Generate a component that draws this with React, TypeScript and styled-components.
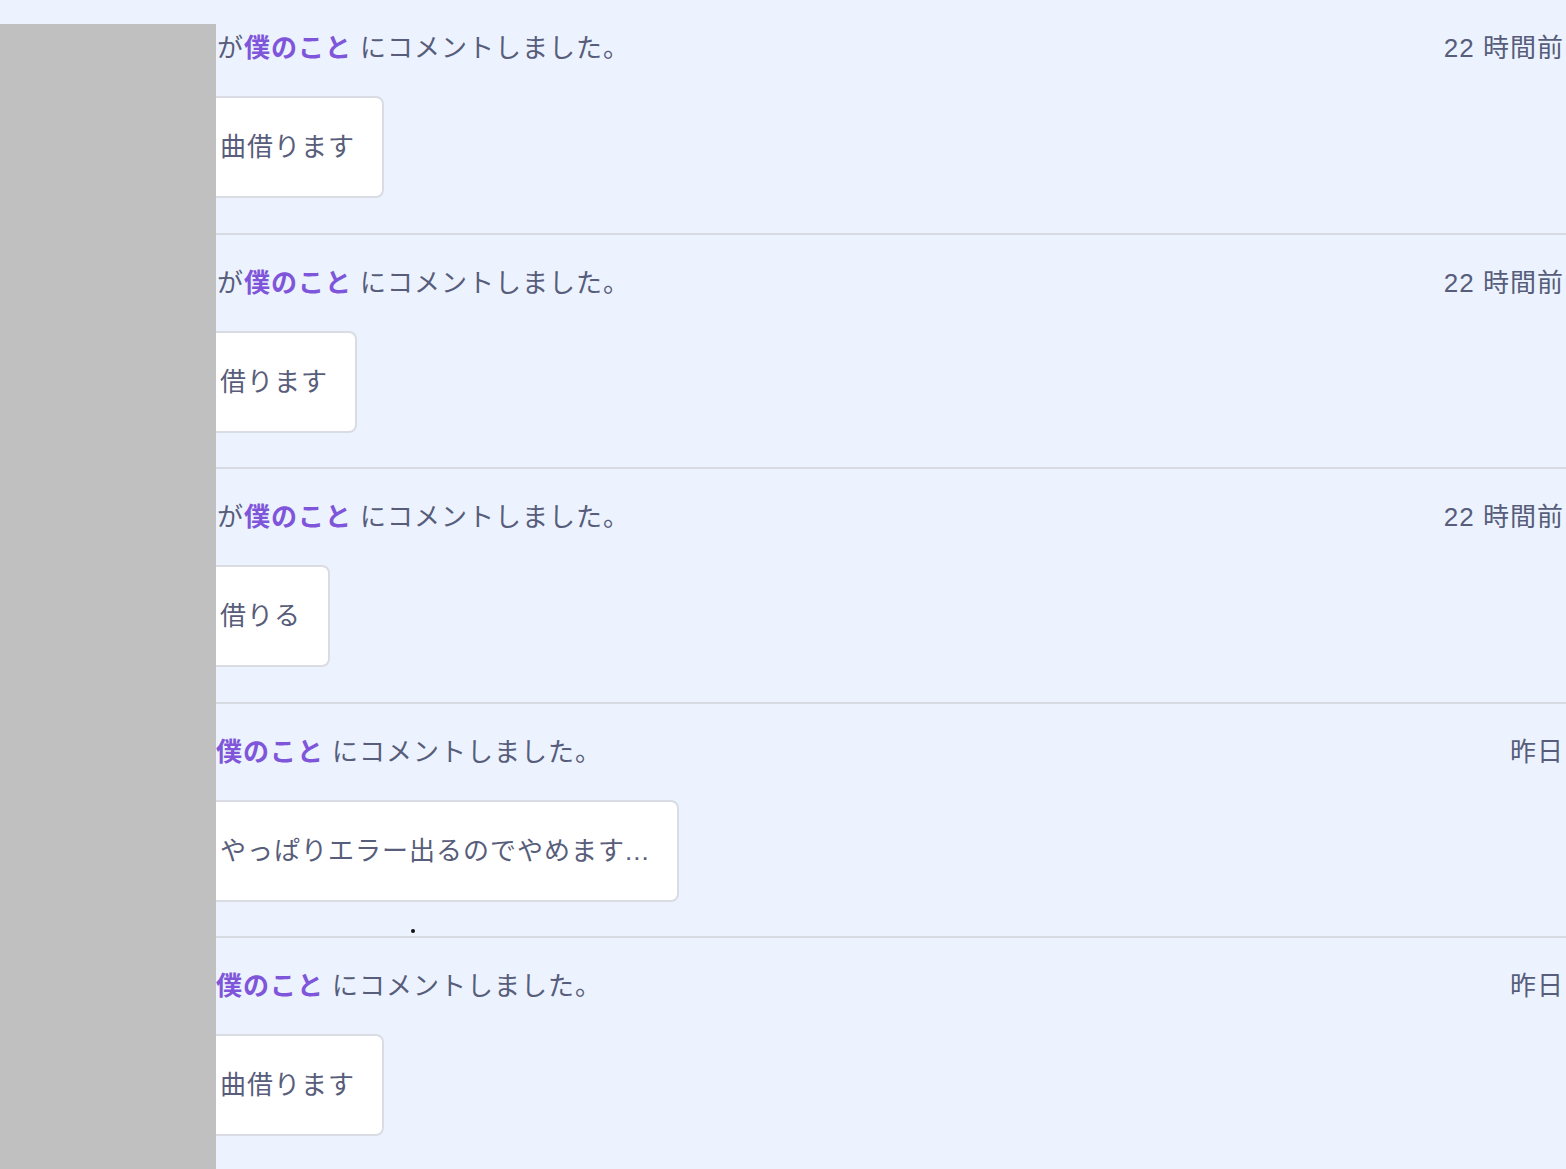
import React from "react";
import styled, { createGlobalStyle } from "styled-components";

const Global = createGlobalStyle`
  html, body {
    margin: 0;
    padding: 0;
    background: #ecf3ff;
  }
  body {
    font-family: "Liberation Sans", "Noto Sans CJK JP", sans-serif;
    color: #575d7a;
  }
`;

const Page = styled.div`
  position: relative;
  min-height: 1169px;
  overflow: hidden;
  background: #ecf3ff;
`;

const List = styled.ul`
  list-style: none;
  margin: 0;
  padding: 0;
`;

const Item = styled.li`
  position: relative;
  display: flex;
  flex-direction: column;
  align-items: flex-start;
  gap: 29px;
  padding: 29px 2px 34.5px 190px;
  border-bottom: 2px solid #d7dae0;
`;

const Header = styled.div`
  align-self: stretch;
  display: flex;
  justify-content: space-between;
  align-items: center;
  font-size: 26px;
  line-height: 38px;
  letter-spacing: 1px;
  white-space: nowrap;
`;

const Message = styled.span<{ $indent: number }>`
  padding-left: ${(p) => p.$indent}px;
`;

const Target = styled.a`
  color: #7f56d9;
  font-weight: 700;
  text-decoration: none;
  margin-right: 8px;
`;

const Time = styled.time`
  font-size: 26px;
  color: #575d7a;
`;

const Card = styled.div`
  box-sizing: border-box;
  height: 102px;
  display: flex;
  align-items: center;
  padding: 0 27px 0 28px;
  background: #ffffff;
  border: 2px solid #d9dce2;
  border-radius: 8px;
  font-size: 26px;
  line-height: 38px;
  letter-spacing: 1px;
  white-space: nowrap;
`;

const Dot = styled.span`
  position: absolute;
  left: 411px;
  bottom: 3px;
  width: 4px;
  height: 4px;
  border-radius: 50%;
  background: #111;
`;

const Mask = styled.div`
  position: absolute;
  left: 0;
  top: 24px;
  bottom: 0;
  width: 216px;
  background: #c0c0c0;
`;

type Entry = {
  prefix: string;
  indent: number;
  body: string;
  time: string;
  dot?: boolean;
};

const entries: Entry[] = [
  { prefix: "が", indent: 27, body: "曲借ります", time: "22 時間前" },
  { prefix: "が", indent: 27, body: "借ります", time: "22 時間前" },
  { prefix: "が", indent: 27, body: "借りる", time: "22 時間前" },
  { prefix: "", indent: 26, body: "やっぱりエラー出るのでやめます...", time: "昨日", dot: true },
  { prefix: "", indent: 26, body: "曲借ります", time: "昨日" },
];

export default function App() {
  return (
    <Page>
      <Global />
      <List>
        {entries.map((e, i) => (
          <Item key={i}>
            <Header>
              <Message $indent={e.indent}>
                {e.prefix}
                <Target href="#">僕のこと</Target>
                にコメントしました。
              </Message>
              <Time>{e.time}</Time>
            </Header>
            <Card>{e.body}</Card>
            {e.dot && <Dot />}
          </Item>
        ))}
      </List>
      <Mask />
    </Page>
  );
}
